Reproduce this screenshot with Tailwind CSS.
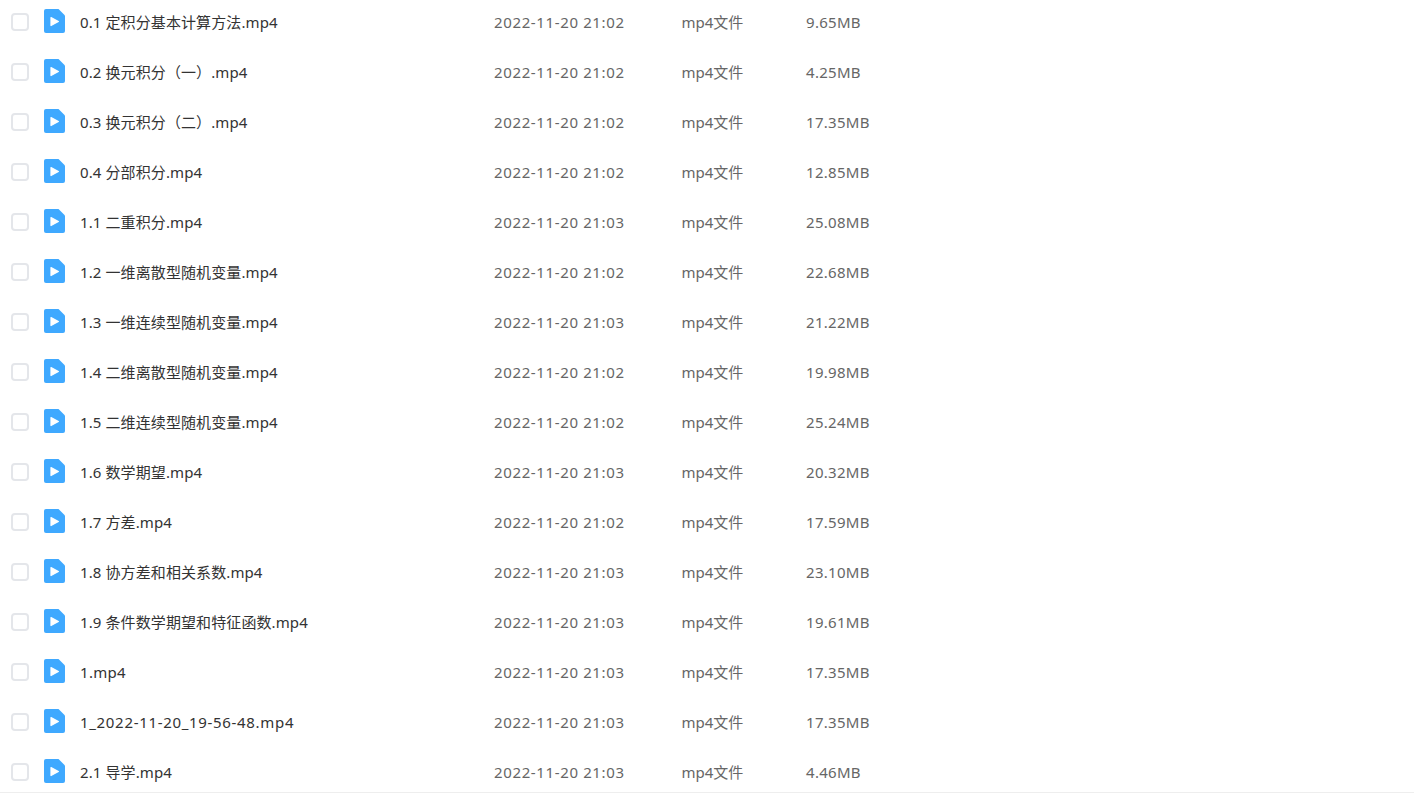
<!DOCTYPE html>
<html lang="zh-CN">
<head>
<meta charset="utf-8">
<script src="https://cdn.jsdelivr.net/npm/@tailwindcss/browser@4"></script>
<title>文件列表</title>
</head>
<body class="bg-white overflow-hidden">
<main class="h-[793px] overflow-hidden border-b border-[#eeeeee] font-['Noto_Sans','Noto_Sans_CJK_SC',sans-serif] text-[15px]">
<ul class="-mt-[3px]">
<li class="h-[50px] flex items-center"><span class="ml-[11px] w-[18px] h-[18px] rounded-[4px] border-2 border-[#e4e6ea]"></span><svg class="ml-[15px] mb-[2px] w-[21px] h-[24px]" viewBox="0 0 21 24"><path d="M2 0H14.5L21 6.5V22a2 2 0 0 1-2 2H2a2 2 0 0 1-2-2V2a2 2 0 0 1 2-2Z" fill="#3fa9ff"/><path d="M7 8.5 14.4 12.5 7 16.5Z" fill="#fff" stroke="#fff" stroke-width="1.2" stroke-linejoin="round"/></svg><span class="ml-[15px] w-[414px] text-[#333] tracking-[0.1px]">0.1 定积分基本计算方法.mp4</span><span class="w-[187.5px] text-[#666] tracking-[0.63px]">2022-11-20 21:02</span><span class="w-[124.5px] text-[#666]">mp4文件</span><span class="text-[#666] tracking-[0.3px]">9.65MB</span></li>
<li class="h-[50px] flex items-center"><span class="ml-[11px] w-[18px] h-[18px] rounded-[4px] border-2 border-[#e4e6ea]"></span><svg class="ml-[15px] mb-[2px] w-[21px] h-[24px]" viewBox="0 0 21 24"><path d="M2 0H14.5L21 6.5V22a2 2 0 0 1-2 2H2a2 2 0 0 1-2-2V2a2 2 0 0 1 2-2Z" fill="#3fa9ff"/><path d="M7 8.5 14.4 12.5 7 16.5Z" fill="#fff" stroke="#fff" stroke-width="1.2" stroke-linejoin="round"/></svg><span class="ml-[15px] w-[414px] text-[#333] tracking-[0.1px]">0.2 换元积分（一）.mp4</span><span class="w-[187.5px] text-[#666] tracking-[0.63px]">2022-11-20 21:02</span><span class="w-[124.5px] text-[#666]">mp4文件</span><span class="text-[#666] tracking-[0.3px]">4.25MB</span></li>
<li class="h-[50px] flex items-center"><span class="ml-[11px] w-[18px] h-[18px] rounded-[4px] border-2 border-[#e4e6ea]"></span><svg class="ml-[15px] mb-[2px] w-[21px] h-[24px]" viewBox="0 0 21 24"><path d="M2 0H14.5L21 6.5V22a2 2 0 0 1-2 2H2a2 2 0 0 1-2-2V2a2 2 0 0 1 2-2Z" fill="#3fa9ff"/><path d="M7 8.5 14.4 12.5 7 16.5Z" fill="#fff" stroke="#fff" stroke-width="1.2" stroke-linejoin="round"/></svg><span class="ml-[15px] w-[414px] text-[#333] tracking-[0.1px]">0.3 换元积分（二）.mp4</span><span class="w-[187.5px] text-[#666] tracking-[0.63px]">2022-11-20 21:02</span><span class="w-[124.5px] text-[#666]">mp4文件</span><span class="text-[#666] tracking-[0.3px]">17.35MB</span></li>
<li class="h-[50px] flex items-center"><span class="ml-[11px] w-[18px] h-[18px] rounded-[4px] border-2 border-[#e4e6ea]"></span><svg class="ml-[15px] mb-[2px] w-[21px] h-[24px]" viewBox="0 0 21 24"><path d="M2 0H14.5L21 6.5V22a2 2 0 0 1-2 2H2a2 2 0 0 1-2-2V2a2 2 0 0 1 2-2Z" fill="#3fa9ff"/><path d="M7 8.5 14.4 12.5 7 16.5Z" fill="#fff" stroke="#fff" stroke-width="1.2" stroke-linejoin="round"/></svg><span class="ml-[15px] w-[414px] text-[#333] tracking-[0.1px]">0.4 分部积分.mp4</span><span class="w-[187.5px] text-[#666] tracking-[0.63px]">2022-11-20 21:02</span><span class="w-[124.5px] text-[#666]">mp4文件</span><span class="text-[#666] tracking-[0.3px]">12.85MB</span></li>
<li class="h-[50px] flex items-center"><span class="ml-[11px] w-[18px] h-[18px] rounded-[4px] border-2 border-[#e4e6ea]"></span><svg class="ml-[15px] mb-[2px] w-[21px] h-[24px]" viewBox="0 0 21 24"><path d="M2 0H14.5L21 6.5V22a2 2 0 0 1-2 2H2a2 2 0 0 1-2-2V2a2 2 0 0 1 2-2Z" fill="#3fa9ff"/><path d="M7 8.5 14.4 12.5 7 16.5Z" fill="#fff" stroke="#fff" stroke-width="1.2" stroke-linejoin="round"/></svg><span class="ml-[15px] w-[414px] text-[#333] tracking-[0.1px]">1.1 二重积分.mp4</span><span class="w-[187.5px] text-[#666] tracking-[0.63px]">2022-11-20 21:03</span><span class="w-[124.5px] text-[#666]">mp4文件</span><span class="text-[#666] tracking-[0.3px]">25.08MB</span></li>
<li class="h-[50px] flex items-center"><span class="ml-[11px] w-[18px] h-[18px] rounded-[4px] border-2 border-[#e4e6ea]"></span><svg class="ml-[15px] mb-[2px] w-[21px] h-[24px]" viewBox="0 0 21 24"><path d="M2 0H14.5L21 6.5V22a2 2 0 0 1-2 2H2a2 2 0 0 1-2-2V2a2 2 0 0 1 2-2Z" fill="#3fa9ff"/><path d="M7 8.5 14.4 12.5 7 16.5Z" fill="#fff" stroke="#fff" stroke-width="1.2" stroke-linejoin="round"/></svg><span class="ml-[15px] w-[414px] text-[#333] tracking-[0.1px]">1.2 一维离散型随机变量.mp4</span><span class="w-[187.5px] text-[#666] tracking-[0.63px]">2022-11-20 21:02</span><span class="w-[124.5px] text-[#666]">mp4文件</span><span class="text-[#666] tracking-[0.3px]">22.68MB</span></li>
<li class="h-[50px] flex items-center"><span class="ml-[11px] w-[18px] h-[18px] rounded-[4px] border-2 border-[#e4e6ea]"></span><svg class="ml-[15px] mb-[2px] w-[21px] h-[24px]" viewBox="0 0 21 24"><path d="M2 0H14.5L21 6.5V22a2 2 0 0 1-2 2H2a2 2 0 0 1-2-2V2a2 2 0 0 1 2-2Z" fill="#3fa9ff"/><path d="M7 8.5 14.4 12.5 7 16.5Z" fill="#fff" stroke="#fff" stroke-width="1.2" stroke-linejoin="round"/></svg><span class="ml-[15px] w-[414px] text-[#333] tracking-[0.1px]">1.3 一维连续型随机变量.mp4</span><span class="w-[187.5px] text-[#666] tracking-[0.63px]">2022-11-20 21:03</span><span class="w-[124.5px] text-[#666]">mp4文件</span><span class="text-[#666] tracking-[0.3px]">21.22MB</span></li>
<li class="h-[50px] flex items-center"><span class="ml-[11px] w-[18px] h-[18px] rounded-[4px] border-2 border-[#e4e6ea]"></span><svg class="ml-[15px] mb-[2px] w-[21px] h-[24px]" viewBox="0 0 21 24"><path d="M2 0H14.5L21 6.5V22a2 2 0 0 1-2 2H2a2 2 0 0 1-2-2V2a2 2 0 0 1 2-2Z" fill="#3fa9ff"/><path d="M7 8.5 14.4 12.5 7 16.5Z" fill="#fff" stroke="#fff" stroke-width="1.2" stroke-linejoin="round"/></svg><span class="ml-[15px] w-[414px] text-[#333] tracking-[0.1px]">1.4 二维离散型随机变量.mp4</span><span class="w-[187.5px] text-[#666] tracking-[0.63px]">2022-11-20 21:02</span><span class="w-[124.5px] text-[#666]">mp4文件</span><span class="text-[#666] tracking-[0.3px]">19.98MB</span></li>
<li class="h-[50px] flex items-center"><span class="ml-[11px] w-[18px] h-[18px] rounded-[4px] border-2 border-[#e4e6ea]"></span><svg class="ml-[15px] mb-[2px] w-[21px] h-[24px]" viewBox="0 0 21 24"><path d="M2 0H14.5L21 6.5V22a2 2 0 0 1-2 2H2a2 2 0 0 1-2-2V2a2 2 0 0 1 2-2Z" fill="#3fa9ff"/><path d="M7 8.5 14.4 12.5 7 16.5Z" fill="#fff" stroke="#fff" stroke-width="1.2" stroke-linejoin="round"/></svg><span class="ml-[15px] w-[414px] text-[#333] tracking-[0.1px]">1.5 二维连续型随机变量.mp4</span><span class="w-[187.5px] text-[#666] tracking-[0.63px]">2022-11-20 21:02</span><span class="w-[124.5px] text-[#666]">mp4文件</span><span class="text-[#666] tracking-[0.3px]">25.24MB</span></li>
<li class="h-[50px] flex items-center"><span class="ml-[11px] w-[18px] h-[18px] rounded-[4px] border-2 border-[#e4e6ea]"></span><svg class="ml-[15px] mb-[2px] w-[21px] h-[24px]" viewBox="0 0 21 24"><path d="M2 0H14.5L21 6.5V22a2 2 0 0 1-2 2H2a2 2 0 0 1-2-2V2a2 2 0 0 1 2-2Z" fill="#3fa9ff"/><path d="M7 8.5 14.4 12.5 7 16.5Z" fill="#fff" stroke="#fff" stroke-width="1.2" stroke-linejoin="round"/></svg><span class="ml-[15px] w-[414px] text-[#333] tracking-[0.1px]">1.6 数学期望.mp4</span><span class="w-[187.5px] text-[#666] tracking-[0.63px]">2022-11-20 21:03</span><span class="w-[124.5px] text-[#666]">mp4文件</span><span class="text-[#666] tracking-[0.3px]">20.32MB</span></li>
<li class="h-[50px] flex items-center"><span class="ml-[11px] w-[18px] h-[18px] rounded-[4px] border-2 border-[#e4e6ea]"></span><svg class="ml-[15px] mb-[2px] w-[21px] h-[24px]" viewBox="0 0 21 24"><path d="M2 0H14.5L21 6.5V22a2 2 0 0 1-2 2H2a2 2 0 0 1-2-2V2a2 2 0 0 1 2-2Z" fill="#3fa9ff"/><path d="M7 8.5 14.4 12.5 7 16.5Z" fill="#fff" stroke="#fff" stroke-width="1.2" stroke-linejoin="round"/></svg><span class="ml-[15px] w-[414px] text-[#333] tracking-[0.1px]">1.7 方差.mp4</span><span class="w-[187.5px] text-[#666] tracking-[0.63px]">2022-11-20 21:02</span><span class="w-[124.5px] text-[#666]">mp4文件</span><span class="text-[#666] tracking-[0.3px]">17.59MB</span></li>
<li class="h-[50px] flex items-center"><span class="ml-[11px] w-[18px] h-[18px] rounded-[4px] border-2 border-[#e4e6ea]"></span><svg class="ml-[15px] mb-[2px] w-[21px] h-[24px]" viewBox="0 0 21 24"><path d="M2 0H14.5L21 6.5V22a2 2 0 0 1-2 2H2a2 2 0 0 1-2-2V2a2 2 0 0 1 2-2Z" fill="#3fa9ff"/><path d="M7 8.5 14.4 12.5 7 16.5Z" fill="#fff" stroke="#fff" stroke-width="1.2" stroke-linejoin="round"/></svg><span class="ml-[15px] w-[414px] text-[#333] tracking-[0.1px]">1.8 协方差和相关系数.mp4</span><span class="w-[187.5px] text-[#666] tracking-[0.63px]">2022-11-20 21:03</span><span class="w-[124.5px] text-[#666]">mp4文件</span><span class="text-[#666] tracking-[0.3px]">23.10MB</span></li>
<li class="h-[50px] flex items-center"><span class="ml-[11px] w-[18px] h-[18px] rounded-[4px] border-2 border-[#e4e6ea]"></span><svg class="ml-[15px] mb-[2px] w-[21px] h-[24px]" viewBox="0 0 21 24"><path d="M2 0H14.5L21 6.5V22a2 2 0 0 1-2 2H2a2 2 0 0 1-2-2V2a2 2 0 0 1 2-2Z" fill="#3fa9ff"/><path d="M7 8.5 14.4 12.5 7 16.5Z" fill="#fff" stroke="#fff" stroke-width="1.2" stroke-linejoin="round"/></svg><span class="ml-[15px] w-[414px] text-[#333] tracking-[0.1px]">1.9 条件数学期望和特征函数.mp4</span><span class="w-[187.5px] text-[#666] tracking-[0.63px]">2022-11-20 21:03</span><span class="w-[124.5px] text-[#666]">mp4文件</span><span class="text-[#666] tracking-[0.3px]">19.61MB</span></li>
<li class="h-[50px] flex items-center"><span class="ml-[11px] w-[18px] h-[18px] rounded-[4px] border-2 border-[#e4e6ea]"></span><svg class="ml-[15px] mb-[2px] w-[21px] h-[24px]" viewBox="0 0 21 24"><path d="M2 0H14.5L21 6.5V22a2 2 0 0 1-2 2H2a2 2 0 0 1-2-2V2a2 2 0 0 1 2-2Z" fill="#3fa9ff"/><path d="M7 8.5 14.4 12.5 7 16.5Z" fill="#fff" stroke="#fff" stroke-width="1.2" stroke-linejoin="round"/></svg><span class="ml-[15px] w-[414px] text-[#333] tracking-[0.3px]">1.mp4</span><span class="w-[187.5px] text-[#666] tracking-[0.63px]">2022-11-20 21:03</span><span class="w-[124.5px] text-[#666]">mp4文件</span><span class="text-[#666] tracking-[0.3px]">17.35MB</span></li>
<li class="h-[50px] flex items-center"><span class="ml-[11px] w-[18px] h-[18px] rounded-[4px] border-2 border-[#e4e6ea]"></span><svg class="ml-[15px] mb-[2px] w-[21px] h-[24px]" viewBox="0 0 21 24"><path d="M2 0H14.5L21 6.5V22a2 2 0 0 1-2 2H2a2 2 0 0 1-2-2V2a2 2 0 0 1 2-2Z" fill="#3fa9ff"/><path d="M7 8.5 14.4 12.5 7 16.5Z" fill="#fff" stroke="#fff" stroke-width="1.2" stroke-linejoin="round"/></svg><span class="ml-[15px] w-[414px] text-[#333] tracking-[0.68px]">1_2022-11-20_19-56-48.mp4</span><span class="w-[187.5px] text-[#666] tracking-[0.63px]">2022-11-20 21:03</span><span class="w-[124.5px] text-[#666]">mp4文件</span><span class="text-[#666] tracking-[0.3px]">17.35MB</span></li>
<li class="h-[50px] flex items-center"><span class="ml-[11px] w-[18px] h-[18px] rounded-[4px] border-2 border-[#e4e6ea]"></span><svg class="ml-[15px] mb-[2px] w-[21px] h-[24px]" viewBox="0 0 21 24"><path d="M2 0H14.5L21 6.5V22a2 2 0 0 1-2 2H2a2 2 0 0 1-2-2V2a2 2 0 0 1 2-2Z" fill="#3fa9ff"/><path d="M7 8.5 14.4 12.5 7 16.5Z" fill="#fff" stroke="#fff" stroke-width="1.2" stroke-linejoin="round"/></svg><span class="ml-[15px] w-[414px] text-[#333] tracking-[0.1px]">2.1 导学.mp4</span><span class="w-[187.5px] text-[#666] tracking-[0.63px]">2022-11-20 21:03</span><span class="w-[124.5px] text-[#666]">mp4文件</span><span class="text-[#666] tracking-[0.3px]">4.46MB</span></li>
</ul>
</main>
</body>
</html>
